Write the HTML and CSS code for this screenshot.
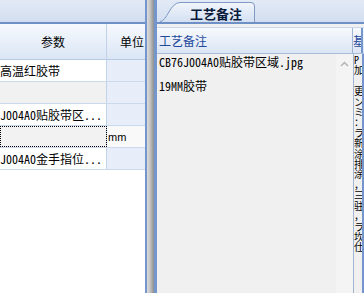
FILE: index.html
```html
<!DOCTYPE html>
<html lang="zh-CN">
  <head>
    <meta charset="UTF-8" />
    <title>工艺备注</title>
    <link rel="stylesheet" href="styles.css">
  </head>
  <body>
    <div class="window">
      <div class="pane-left">
        <div class="strip"></div>
        <div class="grid-head">
          <div class="col-param">参数</div>
          <div class="col-unit">单位</div>
        </div>
        <div class="row">
          <div class="col-param"><span class="cell-text">高温红胶带</span></div>
          <div class="col-unit"></div>
        </div>
        <div class="row alt">
          <div class="col-param"></div>
          <div class="col-unit"></div>
        </div>
        <div class="row">
          <div class="col-param"><span class="cell-text">J004A0贴胶带区...</span></div>
          <div class="col-unit"></div>
        </div>
        <div class="row focus">
          <div class="col-param"></div>
          <div class="col-unit"><span class="unit-text">mm</span></div>
        </div>
        <div class="row">
          <div class="col-param"><span class="cell-text">J004A0金手指位...</span></div>
          <div class="col-unit"></div>
        </div>
      </div>

      <div class="splitter"></div>

      <div class="pane-right">
        <div class="tab-strip">
          <div class="tab">
            <svg class="tab-shape" width="96" height="21" viewBox="0 0 96 21">
              <defs>
                <linearGradient id="tabfill" x1="0" y1="0" x2="0" y2="1">
                  <stop offset="0" stop-color="#f1f5fb" />
                  <stop offset="1" stop-color="#d3e0f2" />
                </linearGradient>
              </defs>
              <path d="M0 21 C7 21 10 2 20 2 L91 2 Q94 2 94 5 L94 21 Z" fill="url(#tabfill)" />
              <path d="M0 20.5 C7 20.5 10 1.5 20 1.5 L91 1.5 Q94.5 1.5 94.5 5 L94.5 21" fill="none" stroke="#7f9ac4" stroke-width="1" />
            </svg>
            <span class="tab-label">工艺备注</span>
          </div>
        </div>
        <div class="note-head">
          <div class="note-col">工艺备注</div>
          <div class="note-extra">基</div>
        </div>
        <div class="note-body">
          <div class="note-text">CB76J004A0贴胶带区域.jpg

19MM胶带</div>
          <div class="note-scroll">
            <svg width="9" height="6" viewBox="0 0 9 6">
              <path d="M1 5 L4.5 1.5 L8 5" fill="none" stroke="#b4b4b4" stroke-width="1.5" />
            </svg>
          </div>
          <div class="note-extra">P<br>加<br><br>更<br>ン<br>ミ<br>：<br>ラ<br>新<br>涂<br>排<br>涂<br>，<br>三<br>驻<br>，<br>ラ<br>坎<br>仕</div>
        </div>
      </div>
    </div>
  </body>
</html>
```

FILE: styles.css
```css
body {
  margin: 0;
  font-family: "Noto Sans Mono CJK SC", "Noto Sans CJK SC", monospace;
  font-size: 12px;
  color: #000;
  background: #fff;
}
.window {
  display: flex;
  width: 364px;
  height: 293px;
  overflow: hidden;
}

/* left grid */
.pane-left {
  width: 145px;
  flex-shrink: 0;
  overflow: hidden;
  background: #fff;
}
.strip {
  height: 22px;
  background: linear-gradient(#e2eaf6, #d2def0);
  border-bottom: 2px solid #6f90c6;
}
.grid-head {
  display: flex;
  height: 35px;
  background: linear-gradient(#f6f9fd, #dbe6f5);
  border-bottom: 1px solid #b7c9e3;
}
.grid-head .col-param,
.grid-head .col-unit {
  display: flex;
  align-items: center;
  justify-content: center;
}
.col-param {
  width: 106px;
  flex-shrink: 0;
  border-right: 1px solid #c2d2e9;
  overflow: hidden;
  white-space: nowrap;
}
.col-unit {
  width: 50px;
  flex-shrink: 0;
  overflow: hidden;
  white-space: nowrap;
}
.row {
  display: flex;
  height: 21px;
  border-bottom: 1px solid #cbd9ed;
}
.row .col-param {
  display: flex;
  align-items: center;
  background: #fff;
}
.row .col-unit {
  background: #e7eefa;
}
.row.alt .col-param {
  background: #f1f1f1;
}
.row.focus .col-param {
  background: #f2f2f2;
  outline: 1px dotted #000;
  outline-offset: -1px;
}
.row.focus .col-unit {
  background: #f9f9f9;
  display: flex;
  align-items: center;
}
.unit-text {
  font-family: "Liberation Sans", sans-serif;
  font-size: 11px;
  color: #000;
  margin-left: 1px;
}

/* splitter */
.splitter {
  width: 12px;
  flex-shrink: 0;
  background: linear-gradient(to right,
    #7596cc 0, #7596cc 2px,
    #dcdcdc 2px, #c4c4c4 5px,
    #a9a9a9 7px, #8e8e8e 9px,
    #7596cc 9px, #7596cc 12px);
}

/* right notes */
.pane-right {
  flex: 1;
  display: flex;
  flex-direction: column;
  background: #f0f0f0;
  overflow: hidden;
}
.tab-strip {
  height: 22px;
  display: flex;
  align-items: flex-end;
  padding-left: 3px;
  background: linear-gradient(#e2eaf6, #d2def0);
  border-bottom: 2px solid #6f90c6;
}
.tab {
  position: relative;
  width: 96px;
  height: 21px;
  display: flex;
  align-items: center;
}
.tab-shape {
  position: absolute;
  left: 0;
  top: 0;
}
.tab-label {
  position: relative;
  margin-left: 30px;
  margin-top: 3px;
  font-family: "Noto Sans CJK SC", sans-serif;
  font-size: 13px;
  font-weight: bold;
  color: #0a1a3a;
}
.note-head {
  display: flex;
  height: 25px;
  margin-top: 3px;
  background: linear-gradient(#f7fafd, #dbe5f4);
  border-top: 1px solid #c9d7eb;
  border-bottom: 1px solid #a9bddb;
  color: #1f4a9a;
}
.note-col {
  width: 196px;
  flex-shrink: 0;
  display: flex;
  align-items: center;
  padding-left: 2px;
  box-sizing: border-box;
  border-right: 1px solid #9fb3d2;
}
.note-extra {
  width: 8px;
  flex-shrink: 0;
  overflow: hidden;
  white-space: nowrap;
  border-right: 2px solid #7596cc;
}
.note-head .note-extra {
  display: flex;
  align-items: center;
}
.note-body {
  flex: 1;
  display: flex;
}
.note-text {
  width: 179px;
  flex-shrink: 0;
  padding: 2px 0 0 2px;
  box-sizing: border-box;
  white-space: pre-wrap;
  line-height: 12px;
}
.note-scroll {
  width: 17px;
  flex-shrink: 0;
  background: #f4f4f4;
  border-right: 1px solid #9fb3d2;
  display: flex;
  justify-content: center;
  padding-top: 7px;
  align-items: flex-start;
}
.note-body .note-extra {
  font-size: 10px;
  line-height: 10.4px;
  padding-top: 1px;
  background: #f0f0f0;
}
```
